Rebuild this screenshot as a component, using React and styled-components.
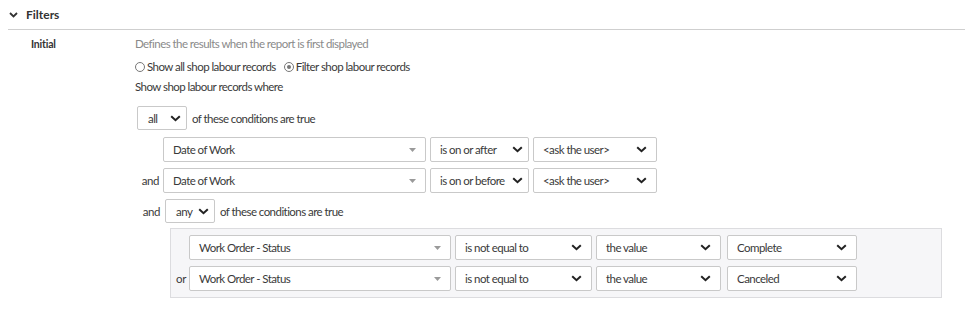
import React from "react";
import styled, { createGlobalStyle } from "styled-components";

const Global = createGlobalStyle`
  html, body { margin: 0; padding: 0; background: #fff; }
  body { font-family: Lato, "Open Sans", sans-serif; font-size: 11.5px; color: #333; }
`;

const Page = styled.div`
  width: 965px;
  height: 325px;
  overflow: hidden;
`;

const Header = styled.div`
  display: flex;
  align-items: center;
  gap: 8px;
  height: 29px;
  margin-left: 8px;
  padding-left: 1px;
  border-bottom: 1px solid #cfcfcf;
  font-weight: 700;
  font-size: 12px;
  color: #333;
`;

const Section = styled.div`
  display: flex;
  padding-top: 6px;
`;

const Label = styled.div`
  width: 104px;
  padding-left: 31px;
  box-sizing: border-box;
  font-weight: 700;
  font-size: 10.5px;
  line-height: 16px;
  color: #333;
  letter-spacing: -0.2px;
`;

const Body = styled.div`
  display: flex;
  flex-direction: column;
  padding-left: 31px;
`;

const Line = styled.div`
  line-height: 16px;
  height: 16px;
  margin-top: ${(p) => p.$mt || 0}px;
  color: ${(p) => (p.$muted ? "#8a8a8a" : "#3a3a3a")};
  letter-spacing: -0.55px;
  display: flex;
  align-items: center;
  white-space: nowrap;
`;

const RadioLabel = styled.label`
  display: inline-flex;
  align-items: center;
  gap: 2px;
  margin-right: 8px;
`;

const RadioDot = styled.span`
  width: 8px;
  height: 8px;
  border: 1px solid #777;
  border-radius: 50%;
  box-sizing: content-box;
  display: inline-flex;
  align-items: center;
  justify-content: center;
  &::after {
    content: "";
    width: 4px;
    height: 4px;
    border-radius: 50%;
    background: ${(p) => (p.$on ? "#777" : "transparent")};
  }
`;

const Row = styled.div`
  display: flex;
  align-items: center;
  margin-top: ${(p) => p.$mt || 0}px;
  margin-left: ${(p) => p.$ml || 0}px;
  height: ${(p) => p.$h || 25}px;
`;

const Conj = styled.div`
  width: ${(p) => p.$w}px;
  text-align: right;
  padding-right: ${(p) => p.$pr || 4}px;
  box-sizing: border-box;
  color: #3a3a3a;
  letter-spacing: -0.4px;
  flex: none;
`;

const SelectBox = styled.div`
  flex: none;
  box-sizing: border-box;
  width: ${(p) => p.$w}px;
  height: ${(p) => p.$h || 25}px;
  margin-right: ${(p) => p.$mr || 0}px;
  border: 1px solid #c9c9c9;
  border-radius: 2px;
  background: #fff;
  display: flex;
  align-items: center;
  justify-content: space-between;
  padding-left: ${(p) => p.$pl || 9}px;
  padding-right: ${(p) => p.$pr || 9}px;
  color: #3a3a3a;
  letter-spacing: -0.55px;
  white-space: nowrap;
`;

const After = styled.span`
  margin-left: 5px;
  letter-spacing: -0.55px;
  color: #3a3a3a;
`;

const Group = styled.div`
  margin-top: 5px;
  margin-left: 35px;
  width: 772px;
  box-sizing: border-box;
  background: #f6f6f8;
  border: 1px solid #dcdcdf;
  padding: 6px 0 6px 0;
  display: flex;
  flex-direction: column;
  gap: 6px;
`;

const Chevron = () => (
  <svg width="11" height="7" viewBox="0 0 11 7">
    <path d="M1.2 1.2 L5.5 5.2 L9.8 1.2" fill="none" stroke="#222" strokeWidth="2" />
  </svg>
);

const Caret = () => (
  <svg width="7" height="4" viewBox="0 0 7 4">
    <path d="M0 0 H7 L3.5 4 Z" fill="#9a9a9a" />
  </svg>
);

const Sel = ({ text, w, h, mr, caret, pl, pr }) => (
  <SelectBox $w={w} $h={h} $mr={mr} $pl={pl} $pr={pr}>
    <span>{text}</span>
    {caret ? <Caret /> : <Chevron />}
  </SelectBox>
);

export default function App() {
  return (
    <Page>
      <Global />
      <Header>
        <svg width="9" height="6" viewBox="0 0 9 6">
          <path d="M1 1 L4.5 4.5 L8 1" fill="none" stroke="#333" strokeWidth="1.8" />
        </svg>
        <span>Filters</span>
      </Header>
      <Section>
        <Label>Initial</Label>
        <Body>
          <Line $muted>Defines the results when the report is first displayed</Line>
          <Line $mt={7}>
            <RadioLabel>
              <RadioDot />
              Show all shop labour records
            </RadioLabel>
            <RadioLabel>
              <RadioDot $on />
              Filter shop labour records
            </RadioLabel>
          </Line>
          <Line $mt={4}>Show shop labour records where</Line>
          <Row $mt={11} $h={24} $ml={2}>
            <Sel text="all" w={50} h={24} pl={10} pr={5} />
            <After>of these conditions are true</After>
          </Row>
          <Row $mt={7}>
            <Conj $w={28} />
            <Sel text="Date of Work" w={263} mr={4} caret pr={9} />
            <Sel text="is on or after" w={99} mr={4} pr={5} />
            <Sel text="<ask the user>" w={124} />
          </Row>
          <Row $mt={6}>
            <Conj $w={28}>and</Conj>
            <Sel text="Date of Work" w={263} mr={4} caret pr={9} />
            <Sel text="is on or before" w={99} mr={4} pr={5} />
            <Sel text="<ask the user>" w={124} />
          </Row>
          <Row $mt={6} $h={24}>
            <Conj $w={30} $pr={5}>and</Conj>
            <Sel text="any" w={50} h={24} pl={10} pr={5} />
            <After>of these conditions are true</After>
          </Row>
          <Group>
            <Row $h={25}>
              <Conj $w={18} />
              <Sel text="Work Order - Status" w={262} mr={4} caret pr={9} />
              <Sel text="is not equal to" w={137} mr={4} />
              <Sel text="the value" w={125} mr={6} />
              <Sel text="Complete" w={130} />
            </Row>
            <Row $h={25}>
              <Conj $w={18} $pr={3}>or</Conj>
              <Sel text="Work Order - Status" w={262} mr={4} caret pr={9} />
              <Sel text="is not equal to" w={137} mr={4} />
              <Sel text="the value" w={125} mr={6} />
              <Sel text="Canceled" w={130} />
            </Row>
          </Group>
        </Body>
      </Section>
    </Page>
  );
}
